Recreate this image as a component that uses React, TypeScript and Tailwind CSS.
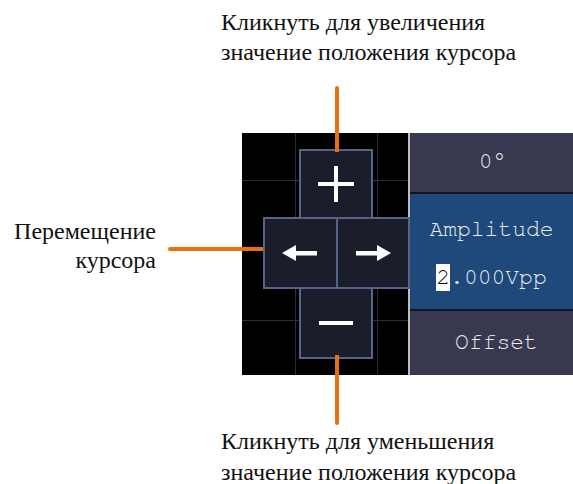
import React from "react";

function Box({ className, children }: { className?: string; children: React.ReactNode }) {
  return (
    <div className={`flex items-center justify-center bg-[#1c1d2b] border-2 border-[#56648c] ${className ?? ""}`}>
      {children}
    </div>
  );
}

export default function App() {
  return (
    <div className="relative w-[573px] h-[484px] bg-white overflow-hidden text-[#111] font-[family-name:'Liberation_Serif',serif]">
      {/* top caption */}
      <div className="h-[133px] pl-[221px] pt-[7px] text-[24px] leading-[30px]">
        <div>Кликнуть для увеличения</div>
        <div>значение положения курсора</div>
      </div>

      {/* middle row */}
      <div className="flex h-[242px]">
        <div className="w-[242px] pt-[84px]">
          <div className="w-[156px] text-right text-[24px] leading-[29px]">
            <div>Перемещение</div>
            <div>курсора</div>
          </div>
        </div>

        {/* oscilloscope screen */}
        <div className="relative w-[168px] bg-black">
          <div className="absolute left-0 right-0 top-[47px] h-px bg-[#2e2e2e]" />
          <div className="absolute left-0 right-0 top-[187px] h-px bg-[#2e2e2e]" />
          <div className="absolute top-0 bottom-0 left-[53px] w-px bg-[#2e2e2e]" />
          <div className="absolute top-0 bottom-0 left-[135px] w-px bg-[#2e2e2e]" />
          <div className="absolute top-0 bottom-0 right-0 w-[2px] bg-[#bdbdbd]" />

          <div className="relative flex flex-col pt-[16px]">
            <Box className="ml-[57px] w-[74px] h-[70px]">
              <svg width="38" height="36" viewBox="0 0 38 36">
                <rect x="1" y="16" width="36" height="4" fill="#fff" />
                <rect x="17" y="0" width="4" height="36" fill="#fff" />
              </svg>
            </Box>
            <div className="flex ml-[21px] -mt-[2px]">
              <Box className="w-[75px] h-[72px]">
                <svg width="36" height="18" viewBox="0 0 36 18">
                  <polygon points="0,9 14,1 14,17" fill="#fff" />
                  <rect x="12" y="7" width="23" height="4.5" fill="#fff" />
                </svg>
              </Box>
              <Box className="-ml-[2px] w-[75px] h-[72px]">
                <svg width="36" height="18" viewBox="0 0 36 18">
                  <polygon points="36,9 22,1 22,17" fill="#fff" />
                  <rect x="1" y="7" width="23" height="4.5" fill="#fff" />
                </svg>
              </Box>
            </div>
            <Box className="ml-[57px] -mt-[2px] w-[74px] h-[72px]">
              <svg width="36" height="6" viewBox="0 0 36 6">
                <rect x="1" y="1" width="34" height="4" fill="#fff" />
              </svg>
            </Box>
          </div>
        </div>

        {/* right menu panel */}
        <div className="flex-1 flex flex-col bg-[#15151f] text-[#ececec] text-[23px] font-[family-name:'FreeMono','Nimbus_Mono_PS','Liberation_Mono',monospace]">
          <div className="h-[59px] bg-[#383850] flex items-center justify-center pl-[2px]">0°</div>
          <div className="h-[2px]" />
          <div className="h-[115px] bg-[#1f487b] flex flex-col items-center justify-center gap-[22px] leading-[26px] pt-[4px]">
            <div>Amplitude</div>
            <div>
              <span className="bg-white text-[#111] py-[2px]">2</span>.000Vpp
            </div>
          </div>
          <div className="h-[2px]" />
          <div className="flex-1 bg-[#383850] flex items-center justify-center pl-[10px]">Offset</div>
        </div>
      </div>

      {/* bottom caption */}
      <div className="pl-[221px] pt-[51px] text-[24px] leading-[31px]">
        <div>Кликнуть для уменьшения</div>
        <div>значение положения курсора</div>
      </div>

      {/* orange callout lines */}
      <div className="absolute left-[335px] top-[86px] w-[4px] h-[66px] bg-[#e8700f] rounded-t-sm" />
      <div className="absolute left-[168px] top-[247px] w-[95px] h-[4px] bg-[#e8700f] rounded-l-sm" />
      <div className="absolute left-[335px] top-[355px] w-[4px] h-[70px] bg-[#e8700f] rounded-b-sm" />
    </div>
  );
}
